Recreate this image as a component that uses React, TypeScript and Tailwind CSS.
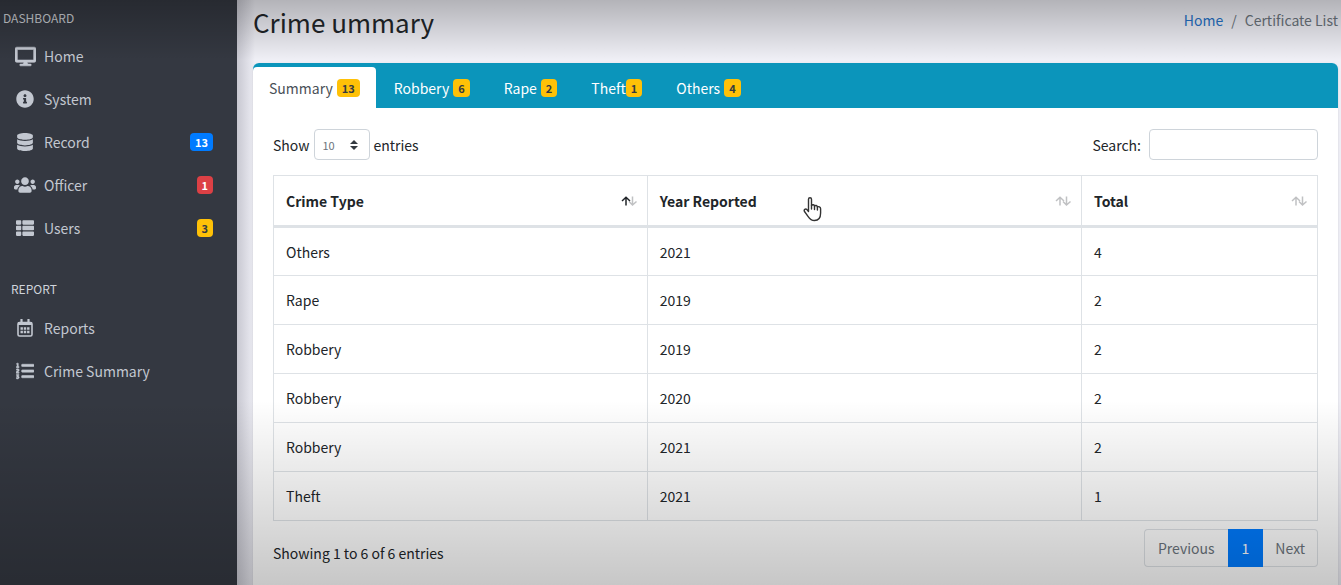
import type { ReactNode } from "react";
import { FaDatabase, FaDesktop, FaInfoCircle, FaListOl, FaThList, FaUsers } from "react-icons/fa";

type NavItem = { label: string; icon: ReactNode; badge?: string; badgeClass?: string };

function CalendarIcon() {
  return (
    <svg viewBox="0 0 18 18" className="size-[18px]" fill="none" stroke="currentColor">
      <path d="M5.500 .5V3M12.500 .5V3" strokeWidth="2.200" strokeLinecap="round" />
      <rect x="2" y="3.500" width="14" height="13.500" rx="1.500" strokeWidth="1.600" />
      <path d="M2 4.500H16" strokeWidth="3" />
      <path d="M4.500 9.500H13.500M4.500 13H13.500" strokeWidth="2.600" strokeDasharray="2.400 0.900" />
    </svg>
  );
}

const dashboardItems: NavItem[] = [
  { label: "Home", icon: <FaDesktop className="size-[21px]" stroke="currentColor" strokeWidth="16" /> },
  { label: "System", icon: <FaInfoCircle className="size-[18px]" /> },
  { label: "Record", icon: <FaDatabase className="size-[18px]" />, badge: "13", badgeClass: "bg-[#007bff] text-white" },
  { label: "Officer", icon: <FaUsers className="size-[22px]" />, badge: "1", badgeClass: "bg-[#dc4045] text-white" },
  { label: "Users", icon: <FaThList className="size-[18px]" />, badge: "3", badgeClass: "bg-[#ffc107] text-[#343a40]" },
];

const reportItems: NavItem[] = [
  { label: "Reports", icon: <CalendarIcon /> },
  { label: "Crime Summary", icon: <FaListOl className="size-[18px]" stroke="currentColor" strokeWidth="16" /> },
];

const tabs = [
  { label: "Summary", count: 13 },
  { label: "Robbery", count: 6 },
  { label: "Rape", count: 2 },
  { label: "Theft", count: 1, tight: true },
  { label: "Others", count: 4 },
];

const rows = [
  ["Others", "2021", "4"],
  ["Rape", "2019", "2"],
  ["Robbery", "2019", "2"],
  ["Robbery", "2020", "2"],
  ["Robbery", "2021", "2"],
  ["Theft", "2021", "1"],
];

function NavList({ items }: { items: NavItem[] }) {
  return (
    <ul>
      {items.map((item) => (
        <li key={item.label} className="mb-[3px]">
          <a href="#" className="flex h-10 items-center pl-3.5 pr-6 text-[#c2c7d0]">
            <span className="flex w-[22px] shrink-0 justify-center">{item.icon}</span>
            <span className="ml-2 flex-1">{item.label}</span>
            {item.badge && (
              <span className={`rounded px-[5px] text-[11px] leading-[18px] font-bold ${item.badgeClass}`}>{item.badge}</span>
            )}
          </a>
        </li>
      ))}
    </ul>
  );
}

function SortArrows({ ascending }: { ascending?: boolean }) {
  return (
    <svg viewBox="0 0 17 12" className="h-3 w-[17px] shrink-0" fill="none" strokeWidth="1.500">
      <path d="M11.500 1.500V10M8 6.500L11.500 10L15.500 6.500" stroke="#c0c1c3" />
      <path d="M5 10.500V2.500M1 6L5 2.300L9 6" stroke={ascending ? "#212529" : "#c0c1c3"} />
    </svg>
  );
}

function SortHeader({ label, ascending, width }: { label: string; ascending?: boolean; width: string }) {
  return (
    <th scope="col" className={`border border-b-[3px] border-[#dee2e6] p-0 text-left font-bold ${width}`}>
      <button type="button" className="flex h-[49px] w-full cursor-pointer items-center justify-between pl-3 pr-[9px] font-bold">
        {label}
        <SortArrows ascending={ascending} />
      </button>
    </th>
  );
}

function HandCursor() {
  return (
    <svg viewBox="0 0 20 26" className="pointer-events-none absolute top-[196px] left-[803px] h-[26px] w-5" fill="#fff" stroke="#333" strokeWidth="1.400" strokeLinejoin="round" strokeLinecap="round">
      <path d="M5.500 15.500V3.200C5.500 1.200 8.500 1.200 8.500 3.200V9.500C9.500 8.200 11.300 8.600 11.500 10C12.500 9 14.200 9.400 14.400 10.900C15.500 10.200 17.600 10.800 17.600 12.800V17C17.600 21.500 15.500 24.500 11.500 24.500C8 24.500 6.500 22.500 5 20.300L1.500 15.500C.5 13.800 2.500 12.300 3.900 13.600Z" />
      <path d="M8.500 9.500V13M11.500 10V13.500M14.400 11V14" />
    </svg>
  );
}

export default function App() {
  return (
    <div className="relative flex h-screen overflow-hidden bg-[#efeff6] font-['Noto_Sans_CJK_SC',sans-serif] text-[14px] leading-6 text-[#212529]">
      <aside className="w-[237px] shrink-0 bg-[#343841]">
        <nav aria-label="Main">
          <h2 className="px-[3px] pt-1.5 pb-1.5 text-[12px] text-[#c8cbd0]">DASHBOARD</h2>
          <NavList items={dashboardItems} />
          <h2 className="px-[11px] pt-[26px] pb-[7px] text-[12px] text-[#d0d4db]">REPORT</h2>
          <NavList items={reportItems} />
        </nav>
      </aside>

      <main className="min-w-0 flex-1 bg-linear-to-r from-[#c8c8d1] to-[#efeff6] to-[18px] pr-[3px] pl-4">
        <header className="flex h-[63px] items-start justify-between">
          <h1 className="pt-[2px] text-[26px] leading-10">Crime ummary</h1>
          <nav aria-label="Breadcrumb" className="flex gap-2 pt-2 text-[#6c757d]">
            <a href="#" className="text-[#2673c8]">Home</a>
            <span>/</span>
            <span>Certificate List</span>
          </nav>
        </header>

        <section className="rounded-t-md bg-white shadow">
          <div role="tablist" className="flex rounded-t-md bg-[#0b95bb] pt-1">
            {tabs.map((tab, i) => (
              <button
                key={tab.label}
                type="button"
                role="tab"
                aria-selected={i === 0}
                className={`flex h-[41px] items-center rounded-t ${i === 0 ? "mr-px bg-white px-4 text-[#495057]" : "px-[17px] text-white"} ${tab.tight ? "" : "gap-1"}`}
              >
                {tab.label}
                <span className="rounded bg-[#ffc107] px-[5px] text-[11px] leading-[18px] font-bold text-[#343a40]">{tab.count}</span>
              </button>
            ))}
          </div>

          <div className="px-5 pt-[21px] pb-10">
            <div className="mb-[15px] flex items-center justify-between">
              <label className="flex items-center gap-1">
                Show
                <span className="relative">
                  <select className="block h-[31px] w-14 appearance-none rounded border border-[#ced4da] bg-white pl-2 text-[11px] text-[#6c757d]">
                    <option>10</option>
                    <option>25</option>
                    <option>50</option>
                  </select>
                  <svg viewBox="0 0 8 10" className="pointer-events-none absolute top-[11px] right-3 h-2.5 w-2" fill="#343a40">
                    <path d="M4 0L8 4H0ZM4 10L0 6H8Z" />
                  </svg>
                </span>
                entries
              </label>
              <label className="flex items-center gap-2">
                Search:
                <input type="search" className="h-[31px] w-[169px] rounded border border-[#ced4da] bg-white px-2" />
              </label>
            </div>

            <table className="w-full table-fixed border-collapse border border-[#dee2e6]">
              <thead>
                <tr>
                  <SortHeader label="Crime Type" ascending width="w-[35.8%]" />
                  <SortHeader label="Year Reported" width="w-[41.6%]" />
                  <SortHeader label="Total" width="w-[22.6%]" />
                </tr>
              </thead>
              <tbody>
                {rows.map((row, i) => (
                  <tr key={i}>
                    {row.map((cell, j) => (
                      <td key={j} className="h-[49px] border border-[#dee2e6] px-3">{cell}</td>
                    ))}
                  </tr>
                ))}
              </tbody>
            </table>

            <div className="flex items-start justify-between pt-2">
              <p className="pt-3">Showing 1 to 6 of 6 entries</p>
              <nav aria-label="Pagination" className="flex h-[38px] text-[#6c757d]">
                <button type="button" className="rounded-l border border-r-0 border-[#dee2e6] px-[13px]">Previous</button>
                <button type="button" aria-current="page" className="border border-[#007bff] bg-[#007bff] px-[13px] text-white">1</button>
                <button type="button" className="rounded-r border border-l-0 border-[#dee2e6] px-3">Next</button>
              </nav>
            </div>
          </div>
        </section>
      </main>

      <div className="pointer-events-none absolute inset-x-0 top-0 h-[60px] bg-linear-to-b from-black/25 to-transparent" />
      <div className="pointer-events-none absolute inset-x-0 bottom-0 h-[185px] bg-linear-to-b from-transparent to-black/22" />
      <HandCursor />
    </div>
  );
}
